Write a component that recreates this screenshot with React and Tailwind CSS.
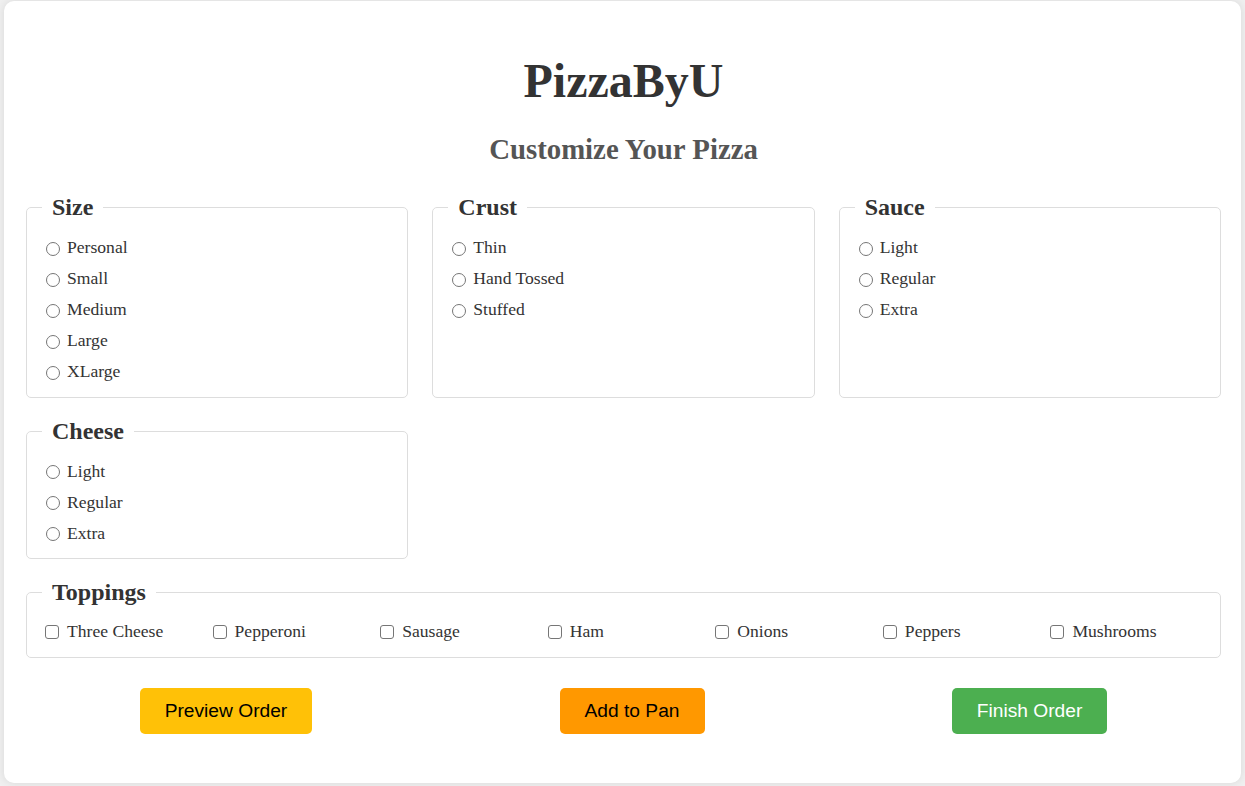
import React from 'react';

const serif = { fontFamily: '"Liberation Serif", "Times New Roman", serif' };

const groups = [
  { title: 'Size', name: 'size', options: ['Personal', 'Small', 'Medium', 'Large', 'XLarge'] },
  { title: 'Crust', name: 'crust', options: ['Thin', 'Hand Tossed', 'Stuffed'] },
  { title: 'Sauce', name: 'sauce', options: ['Light', 'Regular', 'Extra'] },
  { title: 'Cheese', name: 'cheese', options: ['Light', 'Regular', 'Extra'] },
];

const toppings = ['Three Cheese', 'Pepperoni', 'Sausage', 'Ham', 'Onions', 'Peppers', 'Mushrooms'];

const Group = ({ title, name, options }) => (
  <fieldset className="border border-[#ddd] rounded-[5px] px-[15px] pb-[15px]">
    <legend className="px-[10px] text-[24px] leading-[27.6px] font-bold text-[#333]">{title}</legend>
    <div className="flex flex-col gap-[10px] pt-[15px]">
      {options.map(opt => (
        <label key={opt} className="flex items-center h-[21px] text-[17.6px] text-[#333] cursor-pointer">
          <input
            type="radio"
            name={name}
            className="appearance-none shrink-0 ml-[4px] mr-[7px] mt-[3px] w-[14px] h-[14px] rounded-full border border-[#767676] bg-white checked:border-[4px] checked:border-[#0075ff]"
          />
          {opt}
        </label>
      ))}
    </div>
  </fieldset>
);

export default function App() {
  return (
    <div className="min-h-screen bg-[#f0f0f0] px-[4px] pt-[1px] pb-[3px]" style={serif}>
      <div className="bg-white rounded-[10px] shadow-[0_0_10px_rgba(0,0,0,0.1)] pl-[22px] pr-[20px] pt-[52px] pb-[49px]">
        <h1 className="text-center text-[48px] leading-[55px] font-bold text-[#333]">PizzaByU</h1>
        <h2 className="text-center text-[28.8px] leading-[32px] font-bold text-[#555] mt-[25px]">Customize Your Pizza</h2>

        <div className="grid grid-cols-3 gap-x-[24px] gap-y-[20px] mt-[29px]">
          {groups.map(g => (
            <Group key={g.name} {...g} />
          ))}
        </div>

        <fieldset className="border border-[#ddd] rounded-[5px] px-[15px] pb-[15px] mt-[20px]">
          <legend className="px-[10px] text-[24px] leading-[27.6px] font-bold text-[#333]">Toppings</legend>
          <div className="grid grid-cols-7 gap-x-[10px] pt-[15px]">
            {toppings.map(t => (
              <label key={t} className="flex items-center h-[21px] -mt-[1px] text-[17.6px] text-[#333] cursor-pointer">
                <input
                  type="checkbox"
                  className="appearance-none shrink-0 ml-[3px] mr-[8px] mt-[2px] w-[14px] h-[14px] rounded-[3px] border border-[#767676] bg-white checked:bg-[#0075ff] checked:border-[#0075ff]"
                />
                {t}
              </label>
            ))}
          </div>
        </fieldset>

        <div className="flex justify-around -mx-[10px] mt-[30px]" style={{ fontFamily: '"Liberation Sans", Arial, sans-serif' }}>
          <button className="bg-[#ffc107] text-black text-[19.2px] leading-[22px] px-[25px] py-[12px] rounded-[5px]">Preview Order</button>
          <button className="bg-[#ff9800] text-black text-[19.2px] leading-[22px] px-[25px] py-[12px] rounded-[5px]">Add to Pan</button>
          <button className="bg-[#4caf50] text-white text-[19.2px] leading-[22px] px-[25px] py-[12px] rounded-[5px]">Finish Order</button>
        </div>
      </div>
    </div>
  );
}
